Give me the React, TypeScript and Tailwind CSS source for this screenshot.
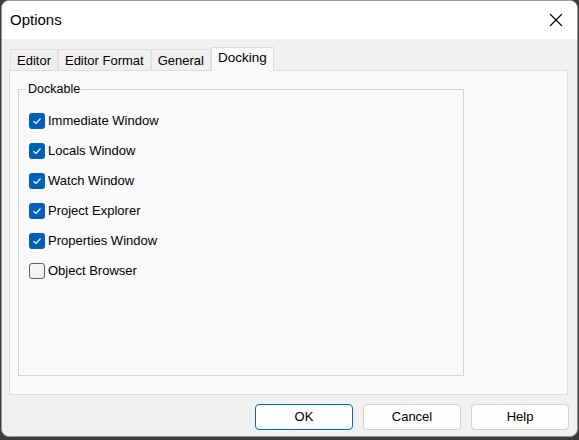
import { useState } from 'react';

const items = [
  { label: 'Immediate Window', checked: true },
  { label: 'Locals Window', checked: true },
  { label: 'Watch Window', checked: true },
  { label: 'Project Explorer', checked: true },
  { label: 'Properties Window', checked: true },
  { label: 'Object Browser', checked: false },
];

const tabs = ['Editor', 'Editor Format', 'General', 'Docking'];

const Check = ({ on }: { on: boolean }) =>
  on ? (
    <span className="w-4 h-4 rounded-[3px] bg-[#005fb8] flex items-center justify-center shrink-0">
      <svg width="10" height="10" viewBox="0 0 10 10">
        <path d="M1.5 5.2 L4 7.5 L8.5 2.5" fill="none" stroke="white" strokeWidth="1.2" />
      </svg>
    </span>
  ) : (
    <span className="w-4 h-4 rounded-[3px] border border-[#5f5f5f] bg-[#f3f3f3] shrink-0" />
  );

const App = () => {
  const [opts, setOpts] = useState(items);
  const [tab, setTab] = useState('Docking');

  return (
    <div
      className="w-[579px] h-[440px] bg-[#3b3b3b] pl-[1px] pr-[1px] pb-[3px]"
      style={{ fontFamily: '"Liberation Sans", Arial, sans-serif' }}
    >
      <div className="h-full rounded-[8px] border border-[#9a9a9a] bg-[#f0f0f0] overflow-hidden flex flex-col">
        <div className="h-[38px] bg-white flex items-center justify-between pl-[8px] pr-[14px] shrink-0">
          <span className="text-[15px] text-black">Options</span>
          <svg width="14" height="14" viewBox="0 0 14 14">
            <path d="M1 1 L13 13 M13 1 L1 13" stroke="black" strokeWidth="1.1" />
          </svg>
        </div>

        <div className="flex-1 px-[7px] pt-[7px] flex flex-col">
          <div className="flex items-end h-[24px] pl-[1px]">
            {tabs.map((t) => (
              <button
                key={t}
                onClick={() => setTab(t)}
                className={
                  t === tab
                    ? 'h-[24px] px-[6px] -mb-px bg-[#f9f9f9] border border-b-0 border-[#dcdcdc] text-[13.5px] text-black relative z-10 pb-[3px]'
                    : 'h-[22px] px-[6px] -mb-px border border-b-0 border-[#e0e0e0] bg-[#f0f0f0] text-[13px] text-black pt-[1px]'
                }
              >
                {t}
              </button>
            ))}
          </div>

          <div className="w-[559px] h-[325px] bg-[#f9f9f9] border border-[#dcdcdc] pt-[9px] pl-[8px]">
            <fieldset className="w-[446px] h-[296px] border border-[#d5d5d5] px-[10px] pt-[13px]">
              <legend className="text-[12.5px] text-black px-[1px] ml-[-2px]">Dockable</legend>
              <div className="flex flex-col gap-[12px]">
                {opts.map((o, i) => (
                  <label
                    key={o.label}
                    className="flex items-center gap-[3px] h-[18px] text-[13px] text-black cursor-default"
                    onClick={() =>
                      setOpts(opts.map((x, j) => (j === i ? { ...x, checked: !x.checked } : x)))
                    }
                  >
                    <Check on={o.checked} />
                    {o.label}
                  </label>
                ))}
              </div>
            </fieldset>
          </div>

          <div className="flex justify-end gap-[10px] pt-[9px] pr-[1px]">
            <button className="w-[98px] h-[26px] rounded-[4px] border-[1.5px] border-[#0067c0] bg-[#fdfdfd] text-[13px] text-black">
              OK
            </button>
            <button className="w-[98px] h-[26px] rounded-[4px] border border-[#d0d0d0] bg-[#fdfdfd] text-[13px] text-black">
              Cancel
            </button>
            <button className="w-[98px] h-[26px] rounded-[4px] border border-[#d0d0d0] bg-[#fdfdfd] text-[13px] text-black">
              Help
            </button>
          </div>
        </div>
      </div>
    </div>
  );
};

export default App;
